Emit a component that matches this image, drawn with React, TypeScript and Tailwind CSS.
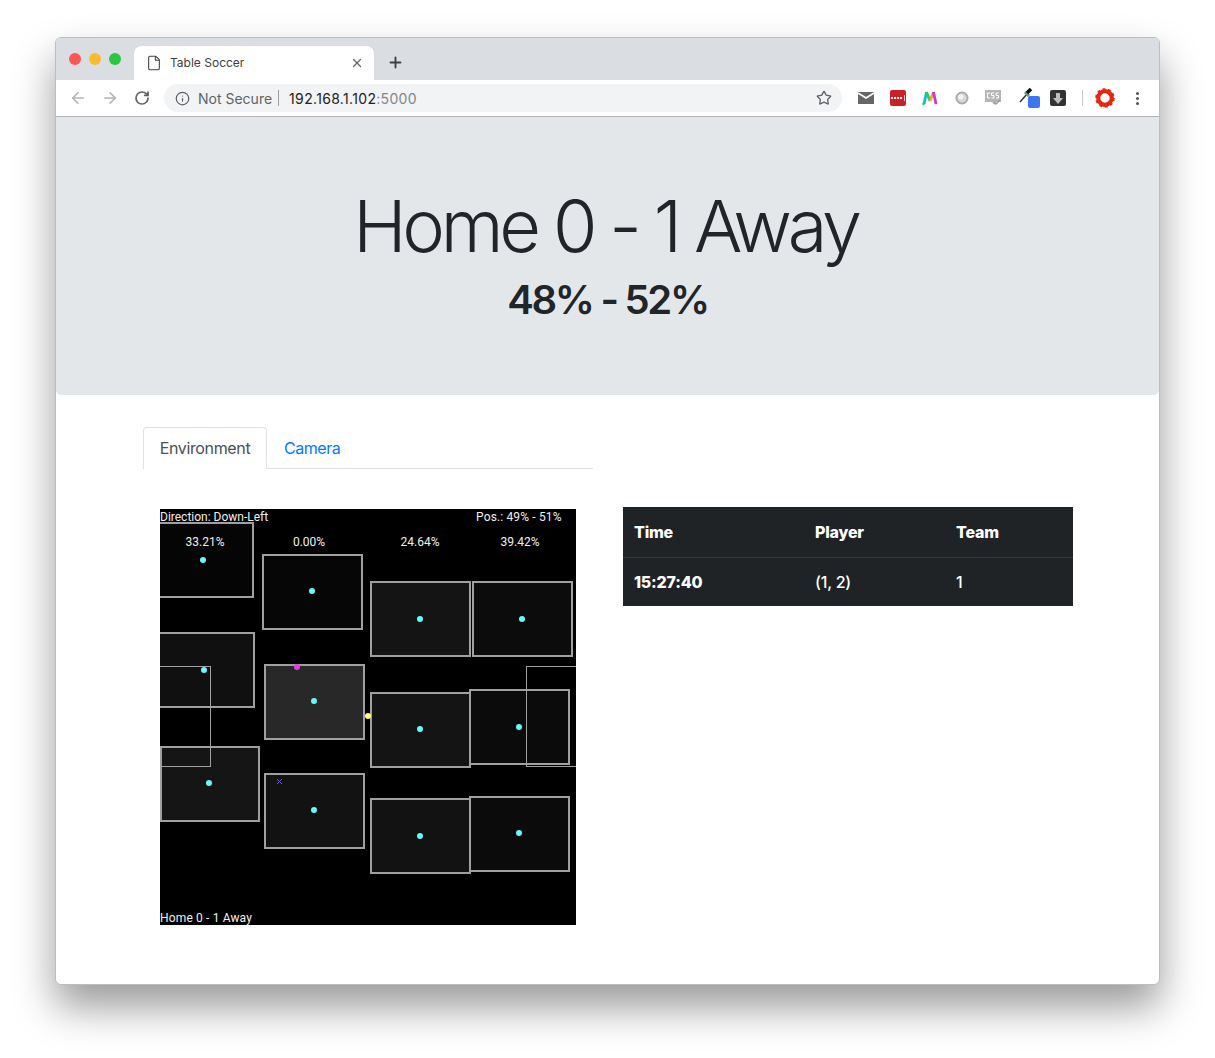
import { ArrowLeft, ArrowRight, Info, RotateCw, Star, X, Plus, File } from "lucide-react";

const players = [
  { left: -2, top: 13, w: 96, h: 76, fill: "bg-[#050505]", dot: [43, 51] },
  { left: 102, top: 45, w: 101, h: 76, fill: "bg-[#060606]", dot: [152, 82] },
  { left: -2, top: 123, w: 97, h: 76, fill: "bg-[#101010]", dot: [44, 161] },
  { left: 104, top: 155, w: 101, h: 76, fill: "bg-[#282828]", dot: [154, 192] },
  { left: 210, top: 72, w: 101, h: 76, fill: "bg-[#141414]", dot: [260, 110] },
  { left: 312, top: 72, w: 101, h: 76, fill: "bg-[#0c0c0c]", dot: [362, 110] },
  { left: 210, top: 183, w: 101, h: 76, fill: "bg-[#141414]", dot: [260, 220] },
  { left: 309, top: 180, w: 101, h: 76, fill: "bg-[#0b0b0b]", dot: [359, 218] },
  { left: 0, top: 237, w: 100, h: 76, fill: "bg-[#151515]", dot: [49, 274] },
  { left: 104, top: 264, w: 101, h: 76, fill: "bg-[#121212]", dot: [154, 301] },
  { left: 210, top: 289, w: 101, h: 76, fill: "bg-[#121212]", dot: [260, 327] },
  { left: 309, top: 287, w: 101, h: 76, fill: "bg-[#0b0b0b]", dot: [359, 324] },
];

const percents = [
  { label: "33.21%", x: 45 },
  { label: "0.00%", x: 149 },
  { label: "24.64%", x: 260 },
  { label: "39.42%", x: 360 },
];

function Extensions() {
  return (
    <div className="flex items-center">
      <svg width="16" height="12" viewBox="0 0 16 12" className="ml-[16px]">
        <path d="M0 0h16v12H0z" fill="#666" />
        <path d="M0 1l8 5 8-5" fill="none" stroke="#fff" strokeWidth="1.6" />
      </svg>
      <div className="ml-[16px] flex h-4 w-4 items-center justify-center gap-px rounded-[2px] bg-[#cc2027]">
        <span className="h-[2px] w-[2px] bg-white" />
        <span className="h-[2px] w-[2px] bg-white" />
        <span className="h-[2px] w-[2px] bg-white" />
        <span className="h-[2px] w-[2px] bg-white" />
        <span className="ml-px h-[6px] w-px bg-white/70" />
      </div>
      <svg width="16" height="16" viewBox="0 0 16 16" className="ml-[16px]">
        <path d="M2 14L4.5 2" stroke="#19b6d8" strokeWidth="2.8" fill="none" />
        <path d="M4.5 2L8 11" stroke="#2fc76a" strokeWidth="2.8" fill="none" />
        <path d="M8 11L11.5 2" stroke="#f6a623" strokeWidth="2.8" fill="none" />
        <path d="M11.5 2L14 14" stroke="#c735d8" strokeWidth="2.8" fill="none" />
        <circle cx="1.5" cy="14" r="1.300" fill="#2fc76a" />
      </svg>
      <svg width="14" height="14" viewBox="0 0 14 14" className="ml-[17px]">
        <circle cx="7" cy="7" r="5.600" fill="#d8d8d8" stroke="#a9a9a9" strokeWidth="1.800" />
        <circle cx="5.800" cy="5.800" r="2.600" fill="#f4f4f4" />
      </svg>
      <svg width="17" height="16" viewBox="0 0 17 16" className="ml-[16px]">
        <path d="M0 0h16v12h-5l-2 3-2-3H0z" fill="#b5b5b5" />
        <path d="M5 3H2.500v5H5M9 3H6.500v2.500H9V8H6.500M13.500 3H11v2.500h2.500V8H11" fill="none" stroke="#fff" strokeWidth="1" />
        <path d="M9 12l2 2 4-4" fill="none" stroke="#9a9a9a" strokeWidth="1.500" />
      </svg>
      <div className="relative ml-[18px] h-5 w-5">
        <svg width="14" height="15" viewBox="0 0 14 15" className="absolute -left-px top-0">
          <path d="M1 14L8 6" stroke="#333" strokeWidth="1.500" />
          <path d="M6 4l4 4" stroke="#5f9c8c" strokeWidth="3" />
          <path d="M8 5l4-4" stroke="#111" strokeWidth="3.600" />
        </svg>
        <span className="absolute left-[8px] top-[8px] h-3 w-3 rounded-[2px] bg-[#3b78f0]" />
      </div>
      <div className="ml-[10px] flex h-4 w-4 items-center justify-center rounded-[2px] bg-[#333]">
        <svg width="10" height="11" viewBox="0 0 10 11">
          <path d="M3 0h4v5h3l-5 6-5-6h3z" fill="#bdbdbd" />
        </svg>
      </div>
      <span className="ml-[16px] h-4 w-px bg-[#c9c9c9]" />
      <svg width="20" height="20" viewBox="0 0 20 20" className="ml-[12px]">
        <circle cx="10" cy="10" r="6.800" fill="none" stroke="#e5260f" strokeWidth="4.200" />
        <circle cx="10" cy="10" r="9" fill="none" stroke="#e5260f" strokeWidth="1.600" strokeDasharray="3 2.650" />
      </svg>
      <div className="ml-[21px] flex flex-col gap-[2px]">
        <span className="h-[3px] w-[3px] rounded-full bg-[#555]" />
        <span className="h-[3px] w-[3px] rounded-full bg-[#555]" />
        <span className="h-[3px] w-[3px] rounded-full bg-[#555]" />
      </div>
    </div>
  );
}

function BrowserChrome() {
  return (
    <>
      <div className="flex h-[42px] bg-[#dadde1] pl-[13px]">
        <div className="mt-[15px] flex gap-2">
          <span className="h-3 w-3 rounded-full bg-[#fc5753]" />
          <span className="h-3 w-3 rounded-full bg-[#fdbc2e]" />
          <span className="h-3 w-3 rounded-full bg-[#28c83f]" />
        </div>
        <div className="ml-[13px] mt-2 flex h-[34px] w-[240px] items-center rounded-t-lg bg-white pl-[12px] pr-[10px]">
          <File size={16} strokeWidth={1.6} className="text-[#3c4043]" />
          <span className="ml-2 flex-1 text-[12px] text-[#3c4043]">Table Soccer</span>
          <X size={14} strokeWidth={2.2} className="text-[#5f6368]" />
        </div>
        <Plus size={17} strokeWidth={2.6} className="ml-[13px] mt-4 text-[#3c4043]" />
      </div>
      <div className="flex h-[37px] items-center border-b border-[#b4b4b6] bg-white pl-[13px] pr-[18px]">
        <ArrowLeft size={18} strokeWidth={2.2} className="text-[#b0b3b7]" />
        <ArrowRight size={18} strokeWidth={2.2} className="ml-[14px] text-[#b0b3b7]" />
        <RotateCw size={16} strokeWidth={2.6} className="ml-[15px] text-[#5f6368]" />
        <div className="ml-[14px] flex h-7 w-[678px] items-center rounded-full bg-[#f1f3f4] pl-[11px] pr-[10px]">
          <Info size={15} strokeWidth={2} className="text-[#5f6368]" />
          <span className="ml-2 text-[14px] text-[#5f6368]">Not Secure</span>
          <span className="ml-[6px] h-4 w-px bg-[#9aa0a6]" />
          <span className="ml-[10px] text-[14px] tracking-[0.33px] text-[#202124]">192.168.1.102<span className="text-[#80868b]">:5000</span></span>
          <Star size={16} strokeWidth={2} className="ml-auto text-[#5f6368]" />
        </div>
        <Extensions />
      </div>
    </>
  );
}

function Field() {
  return (
    <div className="relative h-[416px] w-[416px] shrink-0 overflow-hidden bg-black font-['Roboto',sans-serif] text-[12px] leading-none text-[#f0f0f0]">
      {players.map((p, i) => (
        <div
          key={i}
          className={`absolute border-2 border-[#a0a0a0] ${p.fill}`}
          style={{ left: p.left, top: p.top, width: p.w, height: p.h }}
        />
      ))}
      <div className="absolute left-0 top-[157px] h-[101px] w-[51px] border border-l-0 border-[#a0a0a0]" />
      <div className="absolute left-[366px] top-[157px] h-[101px] w-[50px] border border-r-0 border-[#a0a0a0]" />
      {players.map((p, i) => (
        <span
          key={i}
          className="absolute h-[6px] w-[6px] rounded-full bg-[#66fbfb]"
          style={{ left: p.dot[0] - 3, top: p.dot[1] - 3 }}
        />
      ))}
      <span className="absolute left-[134px] top-[155px] h-[6px] w-[6px] rounded-full bg-[#e040e0]" />
      <span className="absolute left-[205px] top-[204px] h-[6px] w-[6px] rounded-full bg-[#ffff70]" />
      <svg width="7" height="7" viewBox="0 0 7 7" className="absolute left-[116px] top-[269px]">
        <path d="M1 1l5 5M6 1L1 6" stroke="#6a5fd0" strokeWidth="1" />
      </svg>
      <span className="absolute left-0 top-[2px]">Direction: Down-Left</span>
      <span className="absolute left-[316px] top-[2px] tracking-[0.15px]">Pos.: 49% - 51%</span>
      {percents.map((p) => (
        <span key={p.label} className="absolute top-[27px] -translate-x-1/2" style={{ left: p.x }}>
          {p.label}
        </span>
      ))}
      <span className="absolute bottom-px left-0 tracking-[0.15px]">Home 0 - 1 Away</span>
    </div>
  );
}

function EventsTable() {
  return (
    <table className="ml-[47px] h-[99px] w-[450px] -translate-y-[2px] self-start bg-[#1f2326] text-left text-[16px] tracking-[-0.2px] text-white">
      <thead>
        <tr className="h-[50px] border-b border-[#32383e]">
          <th className="w-[181px] pl-[11px] font-extrabold">Time</th>
          <th className="w-[141px] pl-[11px] font-extrabold">Player</th>
          <th className="pl-[11px] font-extrabold">Team</th>
        </tr>
      </thead>
      <tbody>
        <tr>
          <th className="pl-[11px] font-extrabold">15:27:40</th>
          <td className="pl-[11px] font-medium">(1, 2)</td>
          <td className="pl-[11px] font-medium">1</td>
        </tr>
      </tbody>
    </table>
  );
}

export default function App() {
  return (
    <div className="h-[1058px] w-[1215px] overflow-hidden bg-white pl-[55px] pt-[37px] font-['Inter',sans-serif]">
      <div className="h-[948px] w-[1105px] overflow-hidden rounded-[6px] border border-[#bdbdbd] bg-white shadow-[0_22px_40px_0_rgba(0,0,0,0.4)]">
        <BrowserChrome />
        <div className="flex h-[278px] flex-col items-center rounded-b-[5px] bg-[#e4e7ea] pt-[66px] text-[#212529]">
          <h1 className="mr-[4px] text-[72px] font-light leading-[86px] tracking-[-4.2px]">Home 0 - 1 Away</h1>
          <h2 className="mt-[7px] text-[40px] font-semibold leading-[48px] tracking-[-2.3px]">48% - 52%</h2>
        </div>
        <div className="pl-[87px] pt-[32px]">
          <div className="flex h-[42px] w-[450px] border-b border-[#dee2e6]">
            <div className="flex h-[42px] w-[124px] items-center justify-center rounded-t-[4px] border border-b-0 border-[#dee2e6] bg-white pb-px text-[16px] tracking-[-0.35px] text-[#495057]">
              Environment
            </div>
            <div className="ml-[17px] flex h-[42px] items-center text-[16px] tracking-[-0.45px] text-[#007bff]">Camera</div>
          </div>
          <div className="ml-[17px] mt-[40px] flex">
            <Field />
            <EventsTable />
          </div>
        </div>
      </div>
    </div>
  );
}
